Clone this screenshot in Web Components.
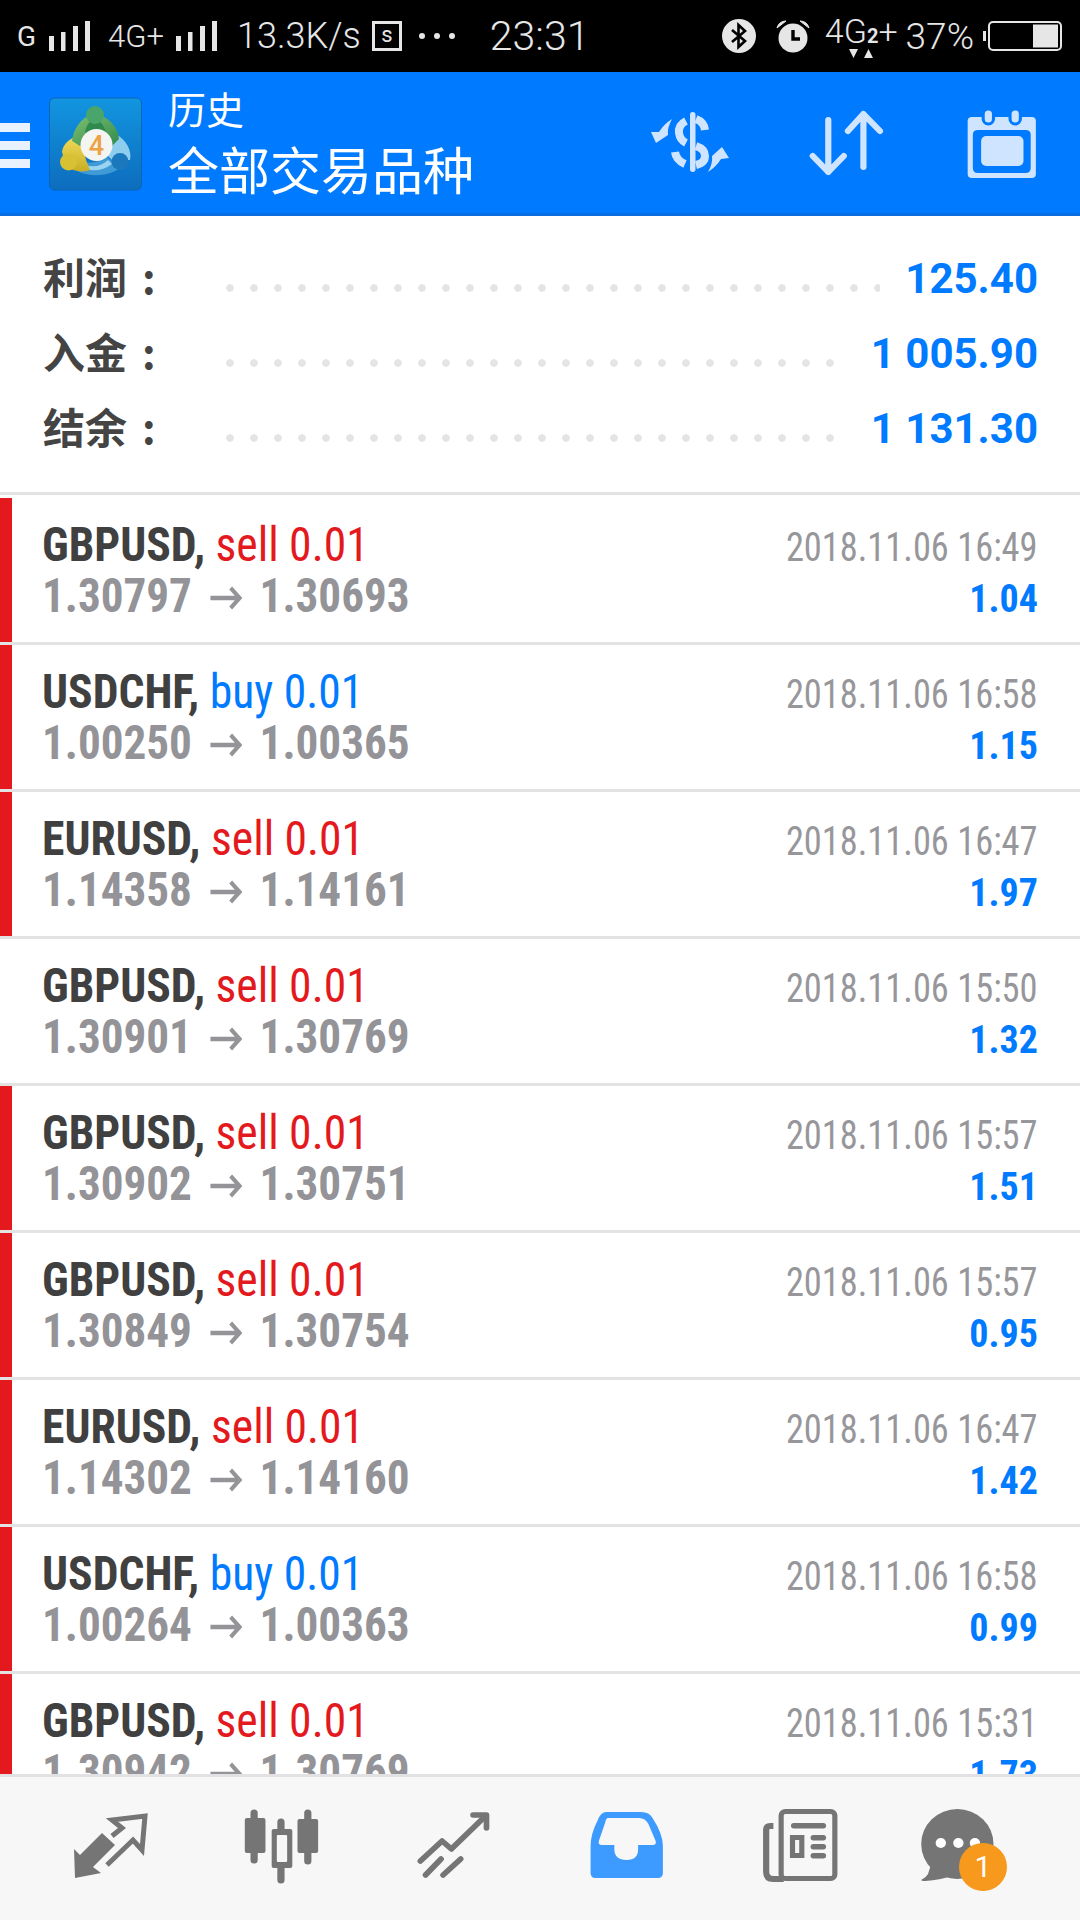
<!DOCTYPE html>
<html lang="zh">
  <head>
    <meta charset="UTF-8" />
    <title>历史</title>
    <style>
      html, body {
        margin: 0;
        height: 100%;
      }
      body {
        width: 1080px;
        height: 1920px;
        display: flex;
        flex-direction: column;
        overflow: hidden;
        font-family: Roboto, "Noto Sans CJK SC", sans-serif;
        background: #fff;
      }
      deal-list {
        flex: 1;
        min-height: 0;
      }
    </style>
  </head>
  <body>
    <status-bar></status-bar>
    <app-header title-top="历史" title-main="全部交易品种"></app-header>
    <summary-box>
      <summary-row label="利润" value="125.40"></summary-row>
      <summary-row label="入金" value="1 005.90"></summary-row>
      <summary-row label="结余" value="1 131.30"></summary-row>
    </summary-box>
    <deal-list>
      <deal-row flag symbol="GBPUSD" side="sell" from="1.30797" to="1.30693" time="2018.11.06 16:49" profit="1.04"></deal-row>
      <deal-row flag symbol="USDCHF" side="buy" from="1.00250" to="1.00365" time="2018.11.06 16:58" profit="1.15"></deal-row>
      <deal-row flag symbol="EURUSD" side="sell" from="1.14358" to="1.14161" time="2018.11.06 16:47" profit="1.97"></deal-row>
      <deal-row symbol="GBPUSD" side="sell" from="1.30901" to="1.30769" time="2018.11.06 15:50" profit="1.32"></deal-row>
      <deal-row flag symbol="GBPUSD" side="sell" from="1.30902" to="1.30751" time="2018.11.06 15:57" profit="1.51"></deal-row>
      <deal-row flag symbol="GBPUSD" side="sell" from="1.30849" to="1.30754" time="2018.11.06 15:57" profit="0.95"></deal-row>
      <deal-row flag symbol="EURUSD" side="sell" from="1.14302" to="1.14160" time="2018.11.06 16:47" profit="1.42"></deal-row>
      <deal-row flag symbol="USDCHF" side="buy" from="1.00264" to="1.00363" time="2018.11.06 16:58" profit="0.99"></deal-row>
      <deal-row flag symbol="GBPUSD" side="sell" from="1.30942" to="1.30769" time="2018.11.06 15:31" profit="1.73"></deal-row>
    </deal-list>
    <tab-bar></tab-bar>

    <script>
      const FONT = 'Roboto, "Noto Sans CJK SC", sans-serif';
      const COND = '"Roboto Condensed", Roboto, sans-serif';

      // 信号格
      const signal = (left) => `<svg style="margin-left:${left}px" width="41" height="30" viewBox="0 0 41 30" fill="#e6e6e6">
        <rect x="0" y="15" width="5" height="15"/><rect x="12" y="11" width="4.5" height="19"/>
        <rect x="24" y="5" width="5" height="25"/><rect x="36" y="0" width="5" height="30"/></svg>`;

      class StatusBar extends HTMLElement {
        constructor() {
          super();
          const shadow = this.attachShadow({ mode: 'open' });
          shadow.innerHTML = `
            <style>
              :host {
                display: flex;
                align-items: center;
                height: 72px;
                flex: none;
                background: #000;
                color: #e6e6e6;
                font-family: ${FONT};
                font-size: 31px;
                font-weight: 300;
                padding: 0 18px 0 17px;
                white-space: nowrap;
                box-sizing: border-box;
              }
              .g { font-size: 28px; font-weight: 400; }
              .speed { font-size: 36px; margin-left: 20px; }
              .time { font-size: 41px; margin-left: 35px; }
              .box {
                width: 24px;
                height: 24px;
                border: 3.5px solid #e6e6e6;
                margin-left: 11px;
                font-size: 22px;
                font-weight: 400;
                line-height: 22px;
                text-align: center;
              }
              .more { display: flex; gap: 9px; margin-left: 17px; }
              .more i { width: 6px; height: 6px; border-radius: 50%; background: #e6e6e6; }
              .spacer { flex: 1; }
              .net { font-size: 34px; margin-left: 15px; position: relative; top: -5px; }
              .net b { font-size: 20px; font-weight: 700; }
              .net svg { position: absolute; left: 24px; top: 38px; }
              .pct { font-size: 37px; margin-left: 8px; }
              svg { display: block; flex: none; }
            </style>
            <span class="g">G</span>
            ${signal(13)}
            <span style="margin-left:18px">4G+</span>
            ${signal(12)}
            <span class="speed">13.3K/s</span>
            <span class="box">s</span>
            <span class="more"><i></i><i></i><i></i></span>
            <span class="time">23:31</span>
            <span class="spacer"></span>
            <svg width="34" height="34" viewBox="0 0 34 34">
              <circle cx="17" cy="17" r="17" fill="#e6e6e6"/>
              <path d="M10 11 L23 22 L16.5 28 V6 L23 12 L10 23" fill="none" stroke="#000" stroke-width="2.6"/>
            </svg>
            <svg style="margin-left:20px" width="34" height="34" viewBox="0 0 34 34">
              <circle cx="17" cy="19" r="14.5" fill="#e6e6e6"/>
              <path d="M1 9 Q3 2 10 2 Z M33 9 Q31 2 24 2 Z" fill="#e6e6e6" stroke="#e6e6e6"/>
              <path d="M17 11 V20 H24" fill="none" stroke="#000" stroke-width="3.4"/>
            </svg>
            <span class="net">4G<b>2</b>+
              <svg width="24" height="9" viewBox="0 0 24 9" fill="#e6e6e6"><path d="M0 0 H9 L4.5 9 Z M15 9 H24 L19.5 0 Z"/></svg>
            </span>
            <span class="pct">37%</span>
            <svg style="margin-left:9px" width="79" height="30" viewBox="0 0 79 30">
              <rect x="0" y="10" width="3" height="10" fill="#e6e6e6"/>
              <rect x="6" y="1" width="72" height="28" rx="4" fill="none" stroke="#e6e6e6" stroke-width="2"/>
              <rect x="50" y="3.5" width="25" height="23" fill="#e6e6e6"/>
            </svg>
          `;
        }
      }

      class AppHeader extends HTMLElement {
        constructor() {
          super();
          const shadow = this.attachShadow({ mode: 'open' });
          shadow.innerHTML = `
            <style>
              :host {
                display: flex;
                align-items: stretch;
                flex: none;
                height: 144px;
                box-sizing: border-box;
                background: #007aff;
                border-bottom: 3px solid #0a6fe0;
                color: #fff;
                font-family: "Noto Sans CJK SC", sans-serif;
              }
              .menu {
                width: 30px;
                flex: none;
                display: flex;
                flex-direction: column;
                justify-content: center;
                gap: 9px;
                padding-top: 6px;
              }
              .menu i { display: block; height: 9px; background: #e8f2ff; }
              .logo { margin: 18px 0 0 10px; flex: none; }
              .titles { margin-left: 18px; display: flex; flex-direction: column; padding-top: 11px; white-space: nowrap; }
              .top { font-size: 38px; line-height: 50px; }
              .main { font-size: 51px; line-height: 70px; }
              .spacer { flex: 1; }
              svg { display: block; flex: none; }
            </style>
            <div class="menu"><i></i><i></i><i></i></div>
            <svg class="logo" width="110" height="110" viewBox="0 0 110 110">
              <defs>
                <linearGradient id="bg" x1="0" y1="0" x2="0" y2="1">
                  <stop offset="0" stop-color="#1295e0"/><stop offset="1" stop-color="#0d6dbd"/>
                </linearGradient>
                <linearGradient id="gr" x1="0" y1="0" x2="1" y2="1">
                  <stop offset="0" stop-color="#7fc06f"/><stop offset="1" stop-color="#2f8a4e"/>
                </linearGradient>
                <linearGradient id="ye" x1="0" y1="0" x2="0" y2="1">
                  <stop offset="0" stop-color="#f0dc5a"/><stop offset="1" stop-color="#c9ae24"/>
                </linearGradient>
              </defs>
              <rect x="9.5" y="8" width="92" height="92" rx="5" fill="url(#bg)" stroke="#0a65b3"/>
              <!-- 蓝 -->
              <path d="M76 44 C86 50 92 60 90 70 L72 70 L62 60 Z" fill="#8fcdee"/>
              <path d="M32 78 C44 87 66 88 80 78 L66 66 C58 74 46 74 38 70 Z" fill="#3f9ad6"/>
              <path d="M40 72 C48 78 60 78 68 70 L72 74 C62 82 48 82 38 76 Z" fill="#9ad4f0"/>
              <circle cx="80" cy="71.5" r="8.5" fill="#1c78bd"/>
              <!-- 黄 -->
              <path d="M22 62 C23 54 30 47 40 46 L46 70 L50 80 C42 83 32 81 26 76 Z" fill="url(#ye)"/>
              <circle cx="28.5" cy="72" r="8.5" fill="#d8c234"/>
              <!-- 绿 -->
              <path d="M32 51 C33 40 40 30 48 26 L62 26 C71 30 78 38 79 49 L72 56 L40 56 Z" fill="url(#gr)"/>
              <path d="M45 42 C47 34 50 30 55 30 C60 30 63 34 66 42 L60 46 L50 46 Z" fill="#2f8a4e"/>
              <circle cx="55" cy="25" r="9" fill="#4aa56c"/>
              <circle cx="56.5" cy="55" r="16" fill="#f4f4f2"/>
              <text x="56.5" y="65" text-anchor="middle" font-family="Roboto, sans-serif" font-size="27" font-weight="500" fill="#eda244">4</text>
            </svg>
            <div class="titles">
              <span class="top">${this.getAttribute('title-top')}</span>
              <span class="main">${this.getAttribute('title-main')}</span>
            </div>
            <span class="spacer"></span>
            <svg width="155" height="141" viewBox="615 72 155 141">
              <g fill="#cfe4ff">
                <rect x="690" y="112" width="5.5" height="60" rx="2.7"/>
                <path d="M672 119 Q667 128 668 135 L656 143 L651 132 L659 132 Q664 124 672 119 Z"/>
                <path d="M708 172 Q713 163 712 156 L722 147 L729 158 L721 159 Q716 167 708 172 Z"/>
              </g>
              <g fill="none" stroke="#cfe4ff" stroke-width="8">
                <path d="M686 121 Q678 125 679 133 Q680 140 686 143"/>
                <path d="M696 119 Q704 122 705 130"/>
                <path d="M696 146 Q705 149 705 156 Q705 163 696 165"/>
                <path d="M675 152 Q676 160 685 164"/>
              </g>
            </svg>
            <svg width="155" height="141" viewBox="762.6 72 150 141" preserveAspectRatio="none">
              <path d="M819 120 V172 M804 156 L819 172 L834 156 M853 167 V114 M838 131 L853 114 L869 131" fill="none" stroke="#cfe4ff" stroke-width="6" stroke-linecap="round" stroke-linejoin="round"/>
            </svg>
            <svg width="155" height="141" viewBox="912.7 72 150 141" preserveAspectRatio="none">
              <path fill="#cfe4ff" fill-rule="evenodd" d="M958 117 H1016 Q1020 117 1020 121 V174 Q1020 178 1016 178 H958 Q954 178 954 174 V121 Q954 117 958 117 Z M964 130 Q959 130 959 135 V168 Q959 173 964 173 H1010 Q1015 173 1015 168 V135 Q1015 130 1010 130 Z"/>
              <rect x="967" y="136" width="41" height="30" rx="5" fill="#cfe4ff"/>
              <rect x="969" y="109" width="10" height="15" rx="5" fill="#cfe4ff" stroke="#007aff" stroke-width="3"/>
              <rect x="995" y="109" width="10" height="15" rx="5" fill="#cfe4ff" stroke="#007aff" stroke-width="3"/>
            </svg>
          `;
        }
      }

      class SummaryBox extends HTMLElement {
        constructor() {
          super();
          const shadow = this.attachShadow({ mode: 'open' });
          shadow.innerHTML = `
            <style>
              :host {
                display: block;
                flex: none;
                height: 282px;
                box-sizing: border-box;
                padding-top: 25px;
                background: #fff;
              }
              .line { height: 3px; background: #e3e3e3; margin-top: 26px; }
            </style>
            <slot></slot>
            <div class="line"></div>
          `;
        }
      }

      class SummaryRow extends HTMLElement {
        constructor() {
          super();
          const shadow = this.attachShadow({ mode: 'open' });
          shadow.innerHTML = `
            <style>
              :host {
                display: flex;
                align-items: center;
                height: 75px;
                padding: 0 42px 0 43px;
                font-family: ${FONT};
              }
              .label {
                width: 182.5px;
                flex: none;
                font: 700 42px/50px "Noto Sans CJK SC", sans-serif;
                color: #444;
                white-space: nowrap;
                margin-bottom: 6px;
              }
              .colon { margin-left: 15px; }
              .dots {
                flex: 1;
                height: 8px;
                margin: 18px 25px 0 0;
                background: radial-gradient(circle at 4px 4px, #e4e4e4 3.5px, transparent 4px) 0 0 / 24px 8px repeat-x;
              }
              .value { font-weight: 700; font-size: 42px; color: #007aff; white-space: nowrap; }
            </style>
            <span class="label">${this.getAttribute('label')}<span class="colon">:</span></span>
            <span class="dots"></span>
            <span class="value">${this.getAttribute('value')}</span>
          `;
        }
      }

      class DealList extends HTMLElement {
        constructor() {
          super();
          const shadow = this.attachShadow({ mode: 'open' });
          shadow.innerHTML = `
            <style>
              :host { display: block; overflow: hidden; }
            </style>
            <slot></slot>
          `;
        }
      }

      class DealRow extends HTMLElement {
        constructor() {
          super();
          const shadow = this.attachShadow({ mode: 'open' });
          const side = this.getAttribute('side');
          shadow.innerHTML = `
            <style>
              :host {
                display: flex;
                height: 147px;
                box-sizing: border-box;
                border-bottom: 3px solid #e3e3e3;
                font-family: ${COND};
                font-stretch: condensed;
              }
              .flag { width: 12px; flex: none; background: ${this.hasAttribute('flag') ? '#e3191e' : 'transparent'}; }
              .left { padding: 21px 0 0 30px; flex: 1; }
              .right { padding: 26px 42px 0 0; text-align: right; }
              .l1, .l2 {
                font-size: 48px;
                line-height: 51px;
                white-space: nowrap;
                font-weight: 700;
                transform: scaleX(0.94);
                transform-origin: 0 0;
              }
              .l1 { transform: scaleX(0.95); }
              .sym { color: #404040; }
              .side { font-weight: 400; color: ${side === 'sell' ? '#e3191e' : '#007aff'}; }
              .l2 { color: #939398; }
              .l2 svg { margin: 0 19px; vertical-align: 2px; }
              .time {
                font-size: 40px;
                line-height: 48px;
                color: #97979b;
                transform: scaleX(0.91);
                transform-origin: 100% 0;
                white-space: nowrap;
              }
              .profit { font-size: 38px; line-height: 48px; margin-top: 3px; font-weight: 700; color: #007aff; }
            </style>
            <div class="flag"></div>
            <div class="left">
              <div class="l1"><span class="sym">${this.getAttribute('symbol')},</span> <span class="side">${side} 0.01</span></div>
              <div class="l2">${this.getAttribute('from')}<svg width="34" height="24" viewBox="0 0 36 24" preserveAspectRatio="none" fill="none" stroke="#939398" stroke-width="4.5"><path d="M0 12 H33 M23 2 L33 12 L23 22"/></svg>${this.getAttribute('to')}</div>
            </div>
            <div class="right">
              <div class="time">${this.getAttribute('time')}</div>
              <div class="profit">${this.getAttribute('profit')}</div>
            </div>
          `;
        }
      }

      class TabBar extends HTMLElement {
        constructor() {
          super();
          const shadow = this.attachShadow({ mode: 'open' });
          shadow.innerHTML = `
            <style>
              :host {
                display: grid;
                grid-template-columns: repeat(6, 170px);
                flex: none;
                height: 146px;
                box-sizing: border-box;
                padding: 23px 0 0 21px;
                background: #f7f7f7;
                border-top: 3px solid #e2e2e4;
                position: relative;
                z-index: 1;
              }
              svg { display: block; }
              .cell { position: relative; height: 90px; }
              .badge {
                position: absolute;
                left: 88px;
                top: 43px;
                width: 48px;
                height: 48px;
                border-radius: 50%;
                background: #f7991c;
                color: #fff;
                font: 400 30px/48px ${FONT};
                text-align: center;
              }
            </style>
            <div class="cell">
              <svg width="170" height="90" viewBox="21 1800 170 90">
                <path fill="#757575" d="M74 1849 L80 1855 L102 1833 L115 1845 L93 1867 L101 1873 L75 1878 Z"/>
                <path fill="none" stroke="#757575" stroke-width="5" d="M112 1836 L122 1828 L112 1820 L145 1816 L142 1850 L133 1840 L107 1865"/>
              </svg>
            </div>
            <div class="cell">
              <svg width="170" height="90" viewBox="184.9 1800 164.6 90" preserveAspectRatio="none">
                <g stroke="#757575" stroke-width="7" stroke-linecap="round">
                  <path d="M246 1813 V1860 M272 1822 V1880 M298 1813 V1861"/>
                </g>
                <rect x="237" y="1818" width="20" height="35" rx="2" fill="#757575"/>
                <rect x="288" y="1819" width="20" height="34" rx="2" fill="#757575"/>
                <rect x="263" y="1829" width="20" height="39" rx="2" fill="#757575"/>
                <rect x="268" y="1835" width="10" height="27" rx="1" fill="#f7f7f7"/>
              </svg>
            </div>
            <div class="cell">
              <svg width="170" height="90" viewBox="349.5 1800 164.6 90" preserveAspectRatio="none">
                <g fill="none" stroke="#757575" stroke-width="5.5" stroke-linecap="round" stroke-linejoin="round">
                  <path d="M407 1861 L428 1841 L437 1849 L470 1816"/>
                  <path d="M458 1815 H471 V1828"/>
                  <path d="M412 1875 L427 1859 M429 1875 L446 1859"/>
                </g>
              </svg>
            </div>
            <div class="cell">
              <svg width="170" height="90" viewBox="531.3 1800 164.6 90" preserveAspectRatio="none">
                <path fill="#3d9bff" d="M604 1812 H638 Q646 1812 649 1818 Q659 1834 659 1846 V1873 Q659 1878 654 1878 H594 Q589 1878 589 1873 V1846 Q589 1834 596 1820 Q599 1812 604 1812 Z"/>
                <path fill="#f7f7f7" d="M606 1818 H636 Q642 1818 645 1824 L652 1841 Q653 1845 649 1845 H635 V1849 Q635 1860 624 1860 Q612 1860 612 1849 V1845 H600 Q596 1845 597 1841 L603 1823 Q604 1818 606 1818 Z"/>
              </svg>
            </div>
            <div class="cell">
              <svg width="170" height="90" viewBox="695.9 1800 164.6 90" preserveAspectRatio="none">
                <rect x="773.5" y="1811.5" width="52" height="67" rx="4" fill="none" stroke="#757575" stroke-width="5"/>
                <path d="M766 1826 H763 Q759 1826 759 1830 V1872 Q759 1879 766 1879 H776" fill="none" stroke="#757575" stroke-width="6"/>
                <rect x="783" y="1823" width="34" height="5.5" rx="2.7" fill="#757575"/>
                <rect x="784.5" y="1837.5" width="9" height="18" fill="none" stroke="#757575" stroke-width="5"/>
                <rect x="802" y="1835" width="15" height="5.5" rx="2.7" fill="#757575"/>
                <rect x="802" y="1844" width="15" height="5.5" rx="2.7" fill="#757575"/>
                <rect x="802" y="1853" width="15" height="5.5" rx="2.7" fill="#757575"/>
              </svg>
            </div>
            <div class="cell">
              <svg width="170" height="90" viewBox="860.4 1800 164.6 90" preserveAspectRatio="none">
                <circle cx="944" cy="1844" r="35" fill="#757575"/>
                <path d="M918 1862 Q918 1876 909 1880 Q909 1881 913 1881 Q928 1880 942 1875 Z" fill="#757575"/>
                <circle cx="928" cy="1843" r="5" fill="#fff"/><circle cx="945" cy="1843" r="5" fill="#fff"/><circle cx="961" cy="1843" r="5" fill="#fff"/>
              </svg>
              <span class="badge">1</span>
            </div>
          `;
        }
      }

      customElements.define('status-bar', StatusBar);
      customElements.define('app-header', AppHeader);
      customElements.define('summary-box', SummaryBox);
      customElements.define('summary-row', SummaryRow);
      customElements.define('deal-list', DealList);
      customElements.define('deal-row', DealRow);
      customElements.define('tab-bar', TabBar);
    </script>
  </body>
</html>
